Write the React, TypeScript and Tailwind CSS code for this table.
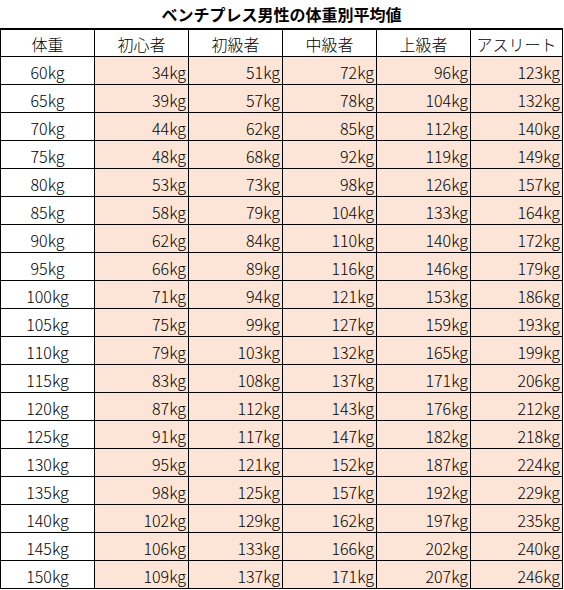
const headers = ['体重', '初心者', '初級者', '中級者', '上級者', 'アスリート']

const rows = [
  [60, 34, 51, 72, 96, 123],
  [65, 39, 57, 78, 104, 132],
  [70, 44, 62, 85, 112, 140],
  [75, 48, 68, 92, 119, 149],
  [80, 53, 73, 98, 126, 157],
  [85, 58, 79, 104, 133, 164],
  [90, 62, 84, 110, 140, 172],
  [95, 66, 89, 116, 146, 179],
  [100, 71, 94, 121, 153, 186],
  [105, 75, 99, 127, 159, 193],
  [110, 79, 103, 132, 165, 199],
  [115, 83, 108, 137, 171, 206],
  [120, 87, 112, 143, 176, 212],
  [125, 91, 117, 147, 182, 218],
  [130, 95, 121, 152, 187, 224],
  [135, 98, 125, 157, 192, 229],
  [140, 102, 129, 162, 197, 235],
  [145, 106, 133, 166, 202, 240],
  [150, 109, 137, 171, 207, 246]
]

const App = () => {
  return (
    <div
      className="w-[564px] bg-white text-black"
      style={{ fontFamily: '"Noto Sans CJK JP", "Noto Sans", sans-serif' }}
    >
      <div className="h-[28px] w-[563px] flex items-center justify-center text-[16px] font-bold leading-none">
        ベンチプレス男性の体重別平均値
      </div>
      <div className="grid grid-cols-[95px_94px_94px_94px_94px_92px] w-[563px] text-[16px] font-light leading-none">
        {headers.map((h, i) => (
          <div
            key={h}
            className={
              'h-[29px] border-t-2 border-b border-r border-black flex items-center justify-center pt-[1px] bg-white' +
              (i === 0 ? ' border-l' : '')
            }
          >
            {h}
          </div>
        ))}
        {rows.map((row) =>
          row.map((v, i) => (
            <div
              key={`${row[0]}-${i}`}
              className={
                i === 0
                  ? 'h-[28px] border-l border-r border-b border-black flex items-center justify-center pt-[2px] bg-white'
                  : 'h-[28px] border-r border-b border-black flex items-center justify-end pr-[2px] pt-[2px] bg-[#fce4d6]'
              }
            >
              {v}kg
            </div>
          ))
        )}
      </div>
    </div>
  )
}

export default App
